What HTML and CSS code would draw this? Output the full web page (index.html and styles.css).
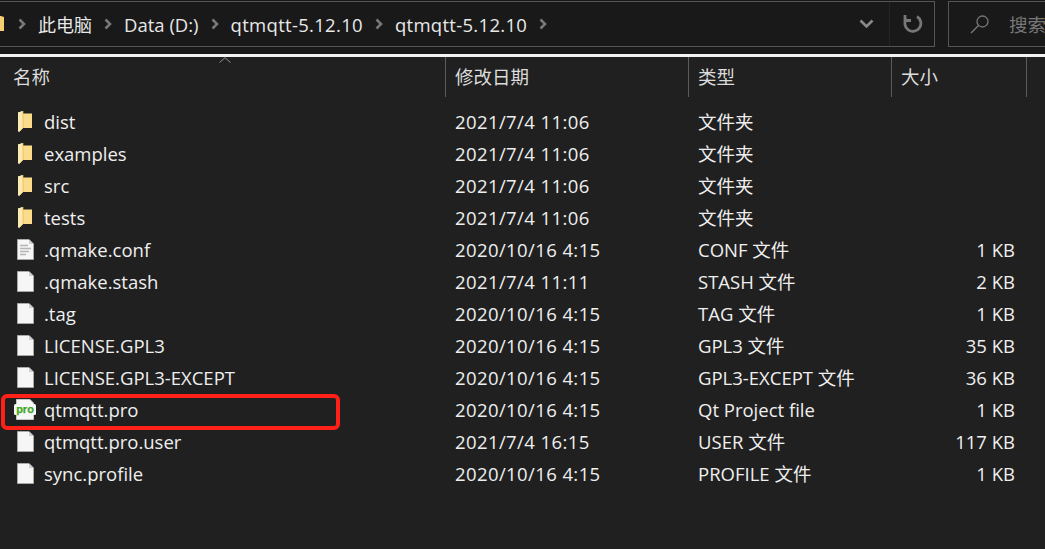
FILE: index.html
```html
<!DOCTYPE html>
<html lang="zh">
<head>
<meta charset="utf-8">
<title>qtmqtt-5.12.10</title>
<link rel="stylesheet" href="styles.css">
</head>
<body>
<svg class="defs" width="0" height="0" aria-hidden="true">
  <defs>
    <symbol id="folder" viewBox="0 0 15 21">
      <path d="M0 1.5 L5 0 L5 2.5 H14 V17 H5 L1 21 L0 20 Z" fill="#fbdc8a"/>
      <path d="M0 1.5 L5 0 V17 L1 21 L0 20 Z" fill="#fdeab0"/>
      <path d="M5 0 V17" stroke="#e6b650" stroke-width=".7"/>
    </symbol>
    <symbol id="file" viewBox="0 0 17 21">
      <path d="M.5 .5 H12 L16.5 5 V20.5 H.5 Z" fill="#f6f6f6" stroke="#a9a9a9"/>
      <path d="M12 .5 V5 H16.5 Z" fill="#cfcfcf"/>
    </symbol>
    <symbol id="conf" viewBox="0 0 17 21">
      <path d="M.5 .5 H12 L16.5 5 V20.5 H.5 Z" fill="#f6f6f6" stroke="#a9a9a9"/>
      <path d="M12 .5 V5 H16.5 Z" fill="#cfcfcf"/>
      <path d="M3 6.5 H11 M3 9.5 H14 M3 12.5 H12 M3 15.5 H9" stroke="#b5b5b5" stroke-width="1.4"/>
    </symbol>
    <symbol id="pro" viewBox="0 0 24 21">
      <path d="M3.5 .5 H17 L20.5 4 V20.5 H3.5 Z" fill="#f7f7f7" stroke="#c4c4c4"/>
      <rect x="1" y="5" width="22" height="11" rx="1.500" fill="#f7f7f7"/>
      <text class="pro-label" x="12" y="13.500" text-anchor="middle">pro</text>
    </symbol>
  </defs>
</svg>

<div class="toolbar">
  <div class="address">
    <svg class="crumb-folder" width="6" height="16" viewBox="0 0 6 16"><path d="M0 0 H1 L4 1 V15 H0 Z" fill="#f5cf72"/></svg>
    <svg class="chev" width="8" height="12" viewBox="0 0 8 12"><path d="M1.500 1.500 L6 6 L1.500 10.500" fill="none" stroke="#777" stroke-width="2.600"/></svg>
    <span class="crumb cjk">此电脑</span>
    <svg class="chev" width="8" height="12" viewBox="0 0 8 12"><path d="M1.500 1.500 L6 6 L1.500 10.500" fill="none" stroke="#777" stroke-width="2.600"/></svg>
    <span class="crumb">Data (D:)</span>
    <svg class="chev" width="8" height="12" viewBox="0 0 8 12"><path d="M1.500 1.500 L6 6 L1.500 10.500" fill="none" stroke="#777" stroke-width="2.600"/></svg>
    <span class="crumb wide">qtmqtt-5.12.10</span>
    <svg class="chev" width="8" height="12" viewBox="0 0 8 12"><path d="M1.500 1.500 L6 6 L1.500 10.500" fill="none" stroke="#777" stroke-width="2.600"/></svg>
    <span class="crumb wide">qtmqtt-5.12.10</span>
    <svg class="chev" width="8" height="12" viewBox="0 0 8 12"><path d="M1.500 1.500 L6 6 L1.500 10.500" fill="none" stroke="#777" stroke-width="2.600"/></svg>
    <span class="spacer"></span>
    <svg class="drop" width="15" height="10" viewBox="0 0 15 10"><path d="M1.500 1.500 L7.500 7.500 L13.500 1.500" fill="none" stroke="#8a8a8a" stroke-width="2.600"/></svg>
    <span class="divider"></span>
    <svg class="refresh" width="20" height="20" viewBox="0 0 20 20"><path d="M3.500 4.500 A8 8 0 1 0 14 2.500 M2 1 V6.500 H8" fill="none" stroke="#777" stroke-width="2.800"/></svg>
  </div>
  <div class="search">
    <svg width="20" height="20" viewBox="0 0 20 20"><circle cx="12.500" cy="7.500" r="5.500" fill="none" stroke="#777" stroke-width="1.300"/><path d="M8.500 11.500 L1 19" stroke="#777" stroke-width="1.500"/></svg>
    <span class="search-text">搜索</span>
  </div>
</div>
<div class="white-line"></div>

<main class="pane">
  <div class="grid header">
    <div class="hcell">名称</div>
    <div class="hcell">修改日期</div>
    <div class="hcell">类型</div>
    <div class="hcell">大小</div>
    <svg class="sort" width="12" height="6" viewBox="0 0 12 6"><path d="M.5 5.500 L6 .7 L11.500 5.500" fill="none" stroke="#8f8f8f"/></svg>
  </div>
  <div class="rows">
    <div class="grid row"><div class="name"><svg class="ic" width="15" height="21"><use href="#folder"/></svg>dist</div><div class="date">2021/7/4 11:06</div><div>文件夹</div><div class="size"></div></div>
    <div class="grid row"><div class="name"><svg class="ic" width="15" height="21"><use href="#folder"/></svg>examples</div><div class="date">2021/7/4 11:06</div><div>文件夹</div><div class="size"></div></div>
    <div class="grid row"><div class="name"><svg class="ic" width="15" height="21"><use href="#folder"/></svg>src</div><div class="date">2021/7/4 11:06</div><div>文件夹</div><div class="size"></div></div>
    <div class="grid row"><div class="name"><svg class="ic" width="15" height="21"><use href="#folder"/></svg>tests</div><div class="date">2021/7/4 11:06</div><div>文件夹</div><div class="size"></div></div>
    <div class="grid row"><div class="name"><svg class="ic file" width="17" height="21"><use href="#conf"/></svg>.qmake.conf</div><div class="date">2020/10/16 4:15</div><div>CONF 文件</div><div class="size">1 KB</div></div>
    <div class="grid row"><div class="name"><svg class="ic file" width="17" height="21"><use href="#file"/></svg>.qmake.stash</div><div class="date">2021/7/4 11:11</div><div>STASH 文件</div><div class="size">2 KB</div></div>
    <div class="grid row"><div class="name"><svg class="ic file" width="17" height="21"><use href="#file"/></svg>.tag</div><div class="date">2020/10/16 4:15</div><div>TAG 文件</div><div class="size">1 KB</div></div>
    <div class="grid row"><div class="name"><svg class="ic file" width="17" height="21"><use href="#file"/></svg>LICENSE.GPL3</div><div class="date">2020/10/16 4:15</div><div>GPL3 文件</div><div class="size">35 KB</div></div>
    <div class="grid row"><div class="name"><svg class="ic file" width="17" height="21"><use href="#file"/></svg>LICENSE.GPL3-EXCEPT</div><div class="date">2020/10/16 4:15</div><div>GPL3-EXCEPT 文件</div><div class="size">36 KB</div></div>
    <div class="grid row"><div class="name"><svg class="ic pro-ic" width="24" height="21"><use href="#pro"/></svg>qtmqtt.pro</div><div class="date">2020/10/16 4:15</div><div>Qt Project file</div><div class="size">1 KB</div></div>
    <div class="grid row"><div class="name"><svg class="ic file" width="17" height="21"><use href="#file"/></svg>qtmqtt.pro.user</div><div class="date">2021/7/4 16:15</div><div>USER 文件</div><div class="size">117 KB</div></div>
    <div class="grid row"><div class="name"><svg class="ic file" width="17" height="21"><use href="#file"/></svg>sync.profile</div><div class="date">2020/10/16 4:15</div><div>PROFILE 文件</div><div class="size">1 KB</div></div>
  </div>
  <div class="highlight"></div>
</main>
</body>
</html>
```

FILE: styles.css
```css
* { box-sizing: border-box; }
html, body { margin: 0; height: 100%; }
body {
  width: 1045px;
  height: 549px;
  overflow: hidden;
  background: #202020;
  color: #efefef;
  font-family: "Open Sans", "Noto Sans CJK SC", sans-serif;
  font-size: 18.5px;
  display: flex;
  flex-direction: column;
}
.defs { position: absolute; }
.toolbar {
  height: 54px;
  flex: none;
  background: #191919;
  display: flex;
  gap: 13px;
  padding-top: 1px;
  align-items: flex-start;
}
.address {
  width: 935px;
  height: 46px;
  flex: none;
  border: 1px solid #555;
  border-left: 0;
  display: flex;
  align-items: center;
  gap: 12px;
}
.crumb { color: #e8e8e8; }
.crumb.cjk { font-size: 18px; }
.crumb.wide { letter-spacing: .3px; }
.chev { flex: none; }
.spacer { flex: 1; }
.drop { margin-right: 3px; }
.divider { width: 1px; height: 44px; background: #242424; }
.refresh { margin-left: 1px; margin-right: 11px; }
.search {
  flex: 1;
  height: 46px;
  border: 1px solid #555;
  border-right: 0;
  display: flex;
  align-items: center;
  gap: 19px;
  padding-left: 21px;
  white-space: nowrap;
  overflow: hidden;
}
.search svg { flex: none; }
.search-text { color: #777; }
.white-line { height: 3px; flex: none; background: #f2f2f2; }
.pane { position: relative; flex: 1; }
.grid {
  display: grid;
  grid-template-columns: 446px 243px 203px 135px;
}
.header { height: 40px; position: relative; }
.hcell {
  padding-left: 9px;
  height: 40px;
  line-height: 40px;
  border-right: 1px solid #5a5a5a;
  color: #dcdcdc;
}
.hcell:first-child { padding-left: 13px; }
.sort { position: absolute; left: 219px; top: 0; }
.rows { padding-top: 9px; }
.row { height: 32px; align-items: center; line-height: 32px; white-space: nowrap; }
.row > div { padding-left: 9px; }
.row > .date { letter-spacing: .4px; }
.row > .name { display: flex; align-items: center; position: relative; padding-left: 44px; }
.ic { position: absolute; top: 5px; left: 18px; }
.ic.file { left: 17px; }
.ic.pro-ic { left: 13px; }
.row > .size { text-align: right; padding-right: 12px; }
.pro-label {
  font-family: "Liberation Sans", sans-serif;
  font-weight: 700;
  font-size: 11px;
  fill: #3fa824;
  stroke: #3fa824;
  stroke-width: .25px;
}
.highlight {
  position: absolute;
  left: 1px;
  top: 337px;
  width: 339px;
  height: 36px;
  border: 4px solid #ff2118;
  border-radius: 6px;
}
```
